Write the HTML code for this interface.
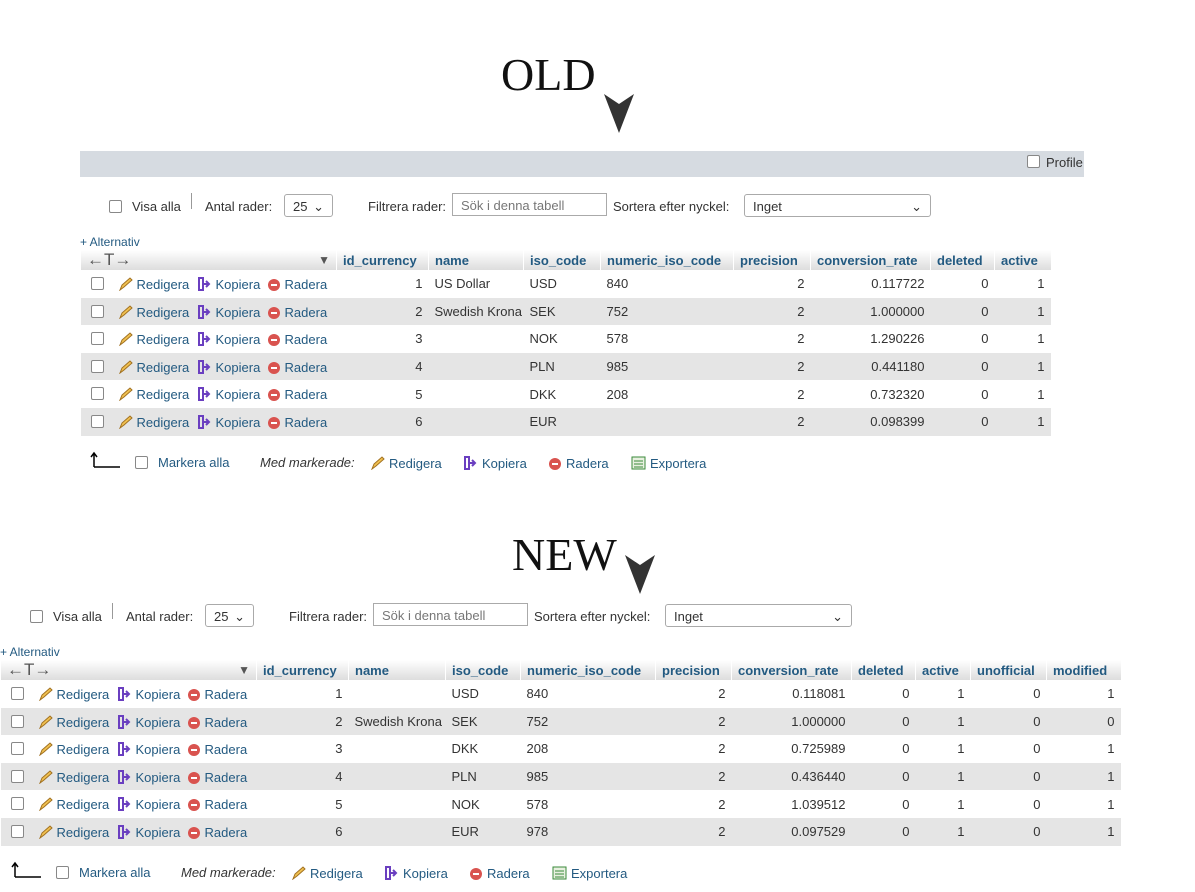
<!DOCTYPE html>
<html><head><meta charset="utf-8"><style>
body{margin:0;width:1195px;height:892px;background:#fff;font-family:"Liberation Sans",sans-serif;font-size:13px;color:#333;position:relative;overflow:hidden}
.a{position:absolute;white-space:nowrap}
.ttl{font-family:"Liberation Serif",serif;font-size:46px;color:#111;letter-spacing:0px}
table{position:absolute;border-collapse:collapse;table-layout:fixed}
td,th{height:27.6px;padding:0 6px;white-space:nowrap;overflow:hidden}
th{height:20px;text-align:left;color:#235a81;font-weight:bold;background:linear-gradient(#fff,#ddd);border-left:1px solid #fff}
th.t{color:#555;font-weight:normal;font-size:17px;line-height:18px}
th.t span{font-size:12px}
tr.g td{background:#e5e5e5}
td.r{text-align:right}
.f{position:relative}
.cb{position:absolute;top:7px;width:11px;height:11px;border:1px solid #888;border-radius:2px;background:#fff}
.lk{color:#235a81}
.ic{display:inline-block;vertical-align:-2px;margin-right:4px}
.red{display:inline-block;width:12px;height:12px;border-radius:50%;background:#d9534f;position:relative;vertical-align:-2px;margin-right:5px}
.red:after{content:"";position:absolute;left:3px;top:5px;width:6px;height:2px;background:#fff}
.sel{position:absolute;border:1px solid #aaa;border-radius:3px;height:23px;background:#fff;box-sizing:border-box;padding:4px 8px;font-size:13px}
</style></head><body>

<div class="a ttl" style="left:501px;top:48px">OLD</div>
<svg class="a" style="left:603px;top:92px" width="32" height="42"><path d="M1 2 L16 12 L31 2 L16 41 Z" fill="#333"/></svg>
<div class="a ttl" style="left:512px;top:528px">NEW</div>
<svg class="a" style="left:624px;top:553px" width="32" height="42"><path d="M1 2 L16 12 L31 2 L16 41 Z" fill="#333"/></svg>

<div class="a" style="left:80px;top:151px;width:1004px;height:26px;background:#d6dbe1"></div>
<div class="cb" style="left:1027px;top:155px"></div>
<div class="a" style="left:1046px;top:155px;font-size:13px">Profile</div>

<div class="cb" style="left:109px;top:200px"></div>
<div class="a" style="left:132px;top:199px">Visa alla</div>
<div class="a" style="left:191px;top:193px;width:1px;height:16px;background:#999"></div>
<div class="a" style="left:205px;top:199px">Antal rader:</div>
<div class="sel" style="left:284px;top:194px;width:49px">25 <span style="float:right">⌄</span></div>
<div class="a" style="left:368px;top:199px">Filtrera rader:</div>
<div class="sel" style="left:452px;top:193px;width:155px;color:#777;border-radius:0">Sök i denna tabell</div>
<div class="a" style="left:613px;top:199px">Sortera efter nyckel:</div>
<div class="sel" style="left:744px;top:194px;width:187px">Inget <span style="float:right">⌄</span></div>
<div class="a lk" style="left:80px;top:235px;font-size:12px">+ Alternativ</div>

<table style="left:80px;top:250px;width:970px">
<colgroup><col style="width:256px"><col style="width:92px"><col style="width:95px"><col style="width:77px"><col style="width:133px"><col style="width:77px"><col style="width:120px"><col style="width:64px"><col style="width:56px"></colgroup>
<tr><th class="t">←T→<span style="float:right">▼</span></th><th>id_currency</th><th>name</th><th>iso_code</th><th>numeric_iso_code</th><th>precision</th><th>conversion_rate</th><th>deleted</th><th>active</th></tr>
<tr><td class="f"><span class="cb" style="left:10px"></span><span style="position:absolute;left:37px;top:7px"><svg class="ic" width="15" height="14"><path d="M2 13 L4 8 L12 1 L14 3 L6 10 Z" fill="#f0c050" stroke="#a07020"/></svg><span class="lk">Redigera</span> &nbsp;<svg class="ic" width="15" height="14"><path d="M2 1h4v12H2zM6 7h6M9 4l3 3-3 3" fill="none" stroke="#6a3fc0" stroke-width="2"/></svg><span class="lk">Kopiera</span> &nbsp;<span class="red"></span><span class="lk">Radera</span></span></td><td class="r">1</td><td>US Dollar</td><td>USD</td><td>840</td><td class="r">2</td><td class="r">0.117722</td><td class="r">0</td><td class="r">1</td></tr>
<tr class="g"><td class="f"><span class="cb" style="left:10px"></span><span style="position:absolute;left:37px;top:7px"><svg class="ic" width="15" height="14"><path d="M2 13 L4 8 L12 1 L14 3 L6 10 Z" fill="#f0c050" stroke="#a07020"/></svg><span class="lk">Redigera</span> &nbsp;<svg class="ic" width="15" height="14"><path d="M2 1h4v12H2zM6 7h6M9 4l3 3-3 3" fill="none" stroke="#6a3fc0" stroke-width="2"/></svg><span class="lk">Kopiera</span> &nbsp;<span class="red"></span><span class="lk">Radera</span></span></td><td class="r">2</td><td>Swedish Krona</td><td>SEK</td><td>752</td><td class="r">2</td><td class="r">1.000000</td><td class="r">0</td><td class="r">1</td></tr>
<tr><td class="f"><span class="cb" style="left:10px"></span><span style="position:absolute;left:37px;top:7px"><svg class="ic" width="15" height="14"><path d="M2 13 L4 8 L12 1 L14 3 L6 10 Z" fill="#f0c050" stroke="#a07020"/></svg><span class="lk">Redigera</span> &nbsp;<svg class="ic" width="15" height="14"><path d="M2 1h4v12H2zM6 7h6M9 4l3 3-3 3" fill="none" stroke="#6a3fc0" stroke-width="2"/></svg><span class="lk">Kopiera</span> &nbsp;<span class="red"></span><span class="lk">Radera</span></span></td><td class="r">3</td><td></td><td>NOK</td><td>578</td><td class="r">2</td><td class="r">1.290226</td><td class="r">0</td><td class="r">1</td></tr>
<tr class="g"><td class="f"><span class="cb" style="left:10px"></span><span style="position:absolute;left:37px;top:7px"><svg class="ic" width="15" height="14"><path d="M2 13 L4 8 L12 1 L14 3 L6 10 Z" fill="#f0c050" stroke="#a07020"/></svg><span class="lk">Redigera</span> &nbsp;<svg class="ic" width="15" height="14"><path d="M2 1h4v12H2zM6 7h6M9 4l3 3-3 3" fill="none" stroke="#6a3fc0" stroke-width="2"/></svg><span class="lk">Kopiera</span> &nbsp;<span class="red"></span><span class="lk">Radera</span></span></td><td class="r">4</td><td></td><td>PLN</td><td>985</td><td class="r">2</td><td class="r">0.441180</td><td class="r">0</td><td class="r">1</td></tr>
<tr><td class="f"><span class="cb" style="left:10px"></span><span style="position:absolute;left:37px;top:7px"><svg class="ic" width="15" height="14"><path d="M2 13 L4 8 L12 1 L14 3 L6 10 Z" fill="#f0c050" stroke="#a07020"/></svg><span class="lk">Redigera</span> &nbsp;<svg class="ic" width="15" height="14"><path d="M2 1h4v12H2zM6 7h6M9 4l3 3-3 3" fill="none" stroke="#6a3fc0" stroke-width="2"/></svg><span class="lk">Kopiera</span> &nbsp;<span class="red"></span><span class="lk">Radera</span></span></td><td class="r">5</td><td></td><td>DKK</td><td>208</td><td class="r">2</td><td class="r">0.732320</td><td class="r">0</td><td class="r">1</td></tr>
<tr class="g"><td class="f"><span class="cb" style="left:10px"></span><span style="position:absolute;left:37px;top:7px"><svg class="ic" width="15" height="14"><path d="M2 13 L4 8 L12 1 L14 3 L6 10 Z" fill="#f0c050" stroke="#a07020"/></svg><span class="lk">Redigera</span> &nbsp;<svg class="ic" width="15" height="14"><path d="M2 1h4v12H2zM6 7h6M9 4l3 3-3 3" fill="none" stroke="#6a3fc0" stroke-width="2"/></svg><span class="lk">Kopiera</span> &nbsp;<span class="red"></span><span class="lk">Radera</span></span></td><td class="r">6</td><td></td><td>EUR</td><td></td><td class="r">2</td><td class="r">0.098399</td><td class="r">0</td><td class="r">1</td></tr>
</table>

<svg class="a" style="left:90px;top:451px" width="32" height="18"><path d="M4 16H30M4 16V3M1 6L4 2L7 6" fill="none" stroke="#000" stroke-width="1.5"/></svg>
<div class="cb" style="left:135px;top:456px"></div>
<div class="a lk" style="left:158px;top:455px">Markera alla</div>
<div class="a" style="left:260px;top:455px;font-style:italic">Med markerade:</div>
<div class="a" style="left:370px;top:456px"><svg class="ic" width="15" height="14"><path d="M2 13 L4 8 L12 1 L14 3 L6 10 Z" fill="#f0c050" stroke="#a07020"/></svg><span class="lk">Redigera</span></div>
<div class="a" style="left:463px;top:456px"><svg class="ic" width="15" height="14"><path d="M2 1h4v12H2zM6 7h6M9 4l3 3-3 3" fill="none" stroke="#6a3fc0" stroke-width="2"/></svg><span class="lk">Kopiera</span></div>
<div class="a" style="left:549px;top:456px"><span class="red"></span><span class="lk">Radera</span></div>
<div class="a" style="left:631px;top:456px"><svg class="ic" width="15" height="14"><rect x="1" y="1" width="13" height="12" fill="#e8f0e0" stroke="#3a8a3a"/><path d="M3 5h9M3 8h9M3 11h9" stroke="#3a8a3a"/></svg><span class="lk">Exportera</span></div>

<div class="cb" style="left:30px;top:610px"></div>
<div class="a" style="left:53px;top:609px">Visa alla</div>
<div class="a" style="left:112px;top:603px;width:1px;height:16px;background:#999"></div>
<div class="a" style="left:126px;top:609px">Antal rader:</div>
<div class="sel" style="left:205px;top:604px;width:49px">25 <span style="float:right">⌄</span></div>
<div class="a" style="left:289px;top:609px">Filtrera rader:</div>
<div class="sel" style="left:373px;top:603px;width:155px;color:#777;border-radius:0">Sök i denna tabell</div>
<div class="a" style="left:534px;top:609px">Sortera efter nyckel:</div>
<div class="sel" style="left:665px;top:604px;width:187px">Inget <span style="float:right">⌄</span></div>
<div class="a lk" style="left:0px;top:645px;font-size:12px">+ Alternativ</div>

<table style="left:0px;top:660px;width:1120px">
<colgroup><col style="width:256px"><col style="width:92px"><col style="width:97px"><col style="width:75px"><col style="width:135px"><col style="width:76px"><col style="width:120px"><col style="width:64px"><col style="width:55px"><col style="width:76px"><col style="width:74px"></colgroup>
<tr><th class="t">←T→<span style="float:right">▼</span></th><th>id_currency</th><th>name</th><th>iso_code</th><th>numeric_iso_code</th><th>precision</th><th>conversion_rate</th><th>deleted</th><th>active</th><th>unofficial</th><th>modified</th></tr>
<tr><td class="f"><span class="cb" style="left:10px"></span><span style="position:absolute;left:37px;top:7px"><svg class="ic" width="15" height="14"><path d="M2 13 L4 8 L12 1 L14 3 L6 10 Z" fill="#f0c050" stroke="#a07020"/></svg><span class="lk">Redigera</span> &nbsp;<svg class="ic" width="15" height="14"><path d="M2 1h4v12H2zM6 7h6M9 4l3 3-3 3" fill="none" stroke="#6a3fc0" stroke-width="2"/></svg><span class="lk">Kopiera</span> &nbsp;<span class="red"></span><span class="lk">Radera</span></span></td><td class="r">1</td><td></td><td>USD</td><td>840</td><td class="r">2</td><td class="r">0.118081</td><td class="r">0</td><td class="r">1</td><td class="r">0</td><td class="r">1</td></tr>
<tr class="g"><td class="f"><span class="cb" style="left:10px"></span><span style="position:absolute;left:37px;top:7px"><svg class="ic" width="15" height="14"><path d="M2 13 L4 8 L12 1 L14 3 L6 10 Z" fill="#f0c050" stroke="#a07020"/></svg><span class="lk">Redigera</span> &nbsp;<svg class="ic" width="15" height="14"><path d="M2 1h4v12H2zM6 7h6M9 4l3 3-3 3" fill="none" stroke="#6a3fc0" stroke-width="2"/></svg><span class="lk">Kopiera</span> &nbsp;<span class="red"></span><span class="lk">Radera</span></span></td><td class="r">2</td><td>Swedish Krona</td><td>SEK</td><td>752</td><td class="r">2</td><td class="r">1.000000</td><td class="r">0</td><td class="r">1</td><td class="r">0</td><td class="r">0</td></tr>
<tr><td class="f"><span class="cb" style="left:10px"></span><span style="position:absolute;left:37px;top:7px"><svg class="ic" width="15" height="14"><path d="M2 13 L4 8 L12 1 L14 3 L6 10 Z" fill="#f0c050" stroke="#a07020"/></svg><span class="lk">Redigera</span> &nbsp;<svg class="ic" width="15" height="14"><path d="M2 1h4v12H2zM6 7h6M9 4l3 3-3 3" fill="none" stroke="#6a3fc0" stroke-width="2"/></svg><span class="lk">Kopiera</span> &nbsp;<span class="red"></span><span class="lk">Radera</span></span></td><td class="r">3</td><td></td><td>DKK</td><td>208</td><td class="r">2</td><td class="r">0.725989</td><td class="r">0</td><td class="r">1</td><td class="r">0</td><td class="r">1</td></tr>
<tr class="g"><td class="f"><span class="cb" style="left:10px"></span><span style="position:absolute;left:37px;top:7px"><svg class="ic" width="15" height="14"><path d="M2 13 L4 8 L12 1 L14 3 L6 10 Z" fill="#f0c050" stroke="#a07020"/></svg><span class="lk">Redigera</span> &nbsp;<svg class="ic" width="15" height="14"><path d="M2 1h4v12H2zM6 7h6M9 4l3 3-3 3" fill="none" stroke="#6a3fc0" stroke-width="2"/></svg><span class="lk">Kopiera</span> &nbsp;<span class="red"></span><span class="lk">Radera</span></span></td><td class="r">4</td><td></td><td>PLN</td><td>985</td><td class="r">2</td><td class="r">0.436440</td><td class="r">0</td><td class="r">1</td><td class="r">0</td><td class="r">1</td></tr>
<tr><td class="f"><span class="cb" style="left:10px"></span><span style="position:absolute;left:37px;top:7px"><svg class="ic" width="15" height="14"><path d="M2 13 L4 8 L12 1 L14 3 L6 10 Z" fill="#f0c050" stroke="#a07020"/></svg><span class="lk">Redigera</span> &nbsp;<svg class="ic" width="15" height="14"><path d="M2 1h4v12H2zM6 7h6M9 4l3 3-3 3" fill="none" stroke="#6a3fc0" stroke-width="2"/></svg><span class="lk">Kopiera</span> &nbsp;<span class="red"></span><span class="lk">Radera</span></span></td><td class="r">5</td><td></td><td>NOK</td><td>578</td><td class="r">2</td><td class="r">1.039512</td><td class="r">0</td><td class="r">1</td><td class="r">0</td><td class="r">1</td></tr>
<tr class="g"><td class="f"><span class="cb" style="left:10px"></span><span style="position:absolute;left:37px;top:7px"><svg class="ic" width="15" height="14"><path d="M2 13 L4 8 L12 1 L14 3 L6 10 Z" fill="#f0c050" stroke="#a07020"/></svg><span class="lk">Redigera</span> &nbsp;<svg class="ic" width="15" height="14"><path d="M2 1h4v12H2zM6 7h6M9 4l3 3-3 3" fill="none" stroke="#6a3fc0" stroke-width="2"/></svg><span class="lk">Kopiera</span> &nbsp;<span class="red"></span><span class="lk">Radera</span></span></td><td class="r">6</td><td></td><td>EUR</td><td>978</td><td class="r">2</td><td class="r">0.097529</td><td class="r">0</td><td class="r">1</td><td class="r">0</td><td class="r">1</td></tr>
</table>

<svg class="a" style="left:11px;top:861px" width="32" height="18"><path d="M4 16H30M4 16V3M1 6L4 2L7 6" fill="none" stroke="#000" stroke-width="1.5"/></svg>
<div class="cb" style="left:56px;top:866px"></div>
<div class="a lk" style="left:79px;top:865px">Markera alla</div>
<div class="a" style="left:181px;top:865px;font-style:italic">Med markerade:</div>
<div class="a" style="left:291px;top:866px"><svg class="ic" width="15" height="14"><path d="M2 13 L4 8 L12 1 L14 3 L6 10 Z" fill="#f0c050" stroke="#a07020"/></svg><span class="lk">Redigera</span></div>
<div class="a" style="left:384px;top:866px"><svg class="ic" width="15" height="14"><path d="M2 1h4v12H2zM6 7h6M9 4l3 3-3 3" fill="none" stroke="#6a3fc0" stroke-width="2"/></svg><span class="lk">Kopiera</span></div>
<div class="a" style="left:470px;top:866px"><span class="red"></span><span class="lk">Radera</span></div>
<div class="a" style="left:552px;top:866px"><svg class="ic" width="15" height="14"><rect x="1" y="1" width="13" height="12" fill="#e8f0e0" stroke="#3a8a3a"/><path d="M3 5h9M3 8h9M3 11h9" stroke="#3a8a3a"/></svg><span class="lk">Exportera</span></div>

</body></html>
